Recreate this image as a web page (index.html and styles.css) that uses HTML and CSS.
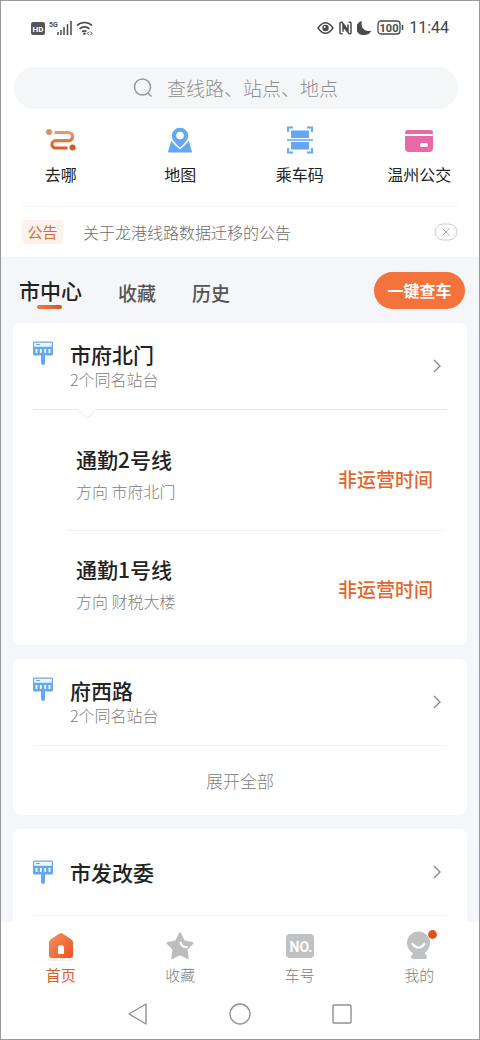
FILE: index.html
```html
<!DOCTYPE html>
<html lang="zh-CN">
<head>
<meta charset="utf-8">
<meta name="viewport" content="width=device-width, initial-scale=1">
<title>公交首页</title>
<link rel="stylesheet" href="styles.css">
</head>
<body>
<svg class="defs" width="0" height="0" aria-hidden="true">
  <defs>
    <linearGradient id="orange" x1="0" y1="0" x2="0" y2="1"><stop offset="0" stop-color="#f0986a"/><stop offset="1" stop-color="#df5a24"/></linearGradient>
    <linearGradient id="home" x1="0" y1="0" x2="1" y2="1"><stop offset="0" stop-color="#f7935f"/><stop offset="1" stop-color="#ea5226"/></linearGradient>
    <symbol id="stop" viewBox="0 0 22 24">
      <rect x="1" y="0.500" width="20" height="14" rx="1.500" fill="#64a8f3"/>
      <rect x="2.200" y="1.700" width="17.600" height="4" rx="0.500" fill="#f1f7fe"/>
      <path d="M4 3.500h4" stroke="#64a8f3" stroke-width="1"/>
      <path d="M4.500 8v4M8.800 8v4M13.200 8v4M17.500 8v4" stroke="#fff" stroke-width="1.800"/>
      <path d="M11 13v9" stroke="#64a8f3" stroke-width="4" stroke-linecap="round"/>
    </symbol>
    <symbol id="chevron" viewBox="0 0 10 16"><path d="M2 2l6 6-6 6" fill="none" stroke="#8b8b8b" stroke-width="1.400"/></symbol>
  </defs>
</svg>
<div class="app">
  <header class="top">
    <div class="status">
      <div class="status-group">
        <svg width="14" height="14" viewBox="0 0 14 14"><rect width="14" height="13" y="1" rx="2" fill="#555"/><text class="hd" x="7" y="11" text-anchor="middle">HD</text></svg>
        <svg width="23" height="16" viewBox="0 0 23 16"><text class="five-g" x="0" y="7">5G</text><path d="M9 12v3M12 10v5M15 7v8M18.500 4v11M22 1v14" stroke="#4a4a4a" stroke-width="1.500"/></svg>
        <svg width="18" height="16" viewBox="0 0 18 16"><path d="M1 5.500a11 11 0 0 1 15 0M3.500 8.800a7.500 7.500 0 0 1 10 0M6 11.800a4 4 0 0 1 4.500-.4" fill="none" stroke="#4a4a4a" stroke-width="1.600"/><circle cx="8.500" cy="13.800" r="1.200" fill="#4a4a4a"/><path d="M12.800 11.700l-1.500 1.700 1.500 1.700M14.500 11.700l1.500 1.700-1.500 1.700" fill="none" stroke="#4a4a4a"/></svg>
      </div>
      <div class="status-group status-right">
        <svg width="17" height="14" viewBox="0 0 17 14"><path d="M1 7Q8.500-3.500 16 7Q8.500 17.500 1 7z" fill="none" stroke="#4a4a4a" stroke-width="1.400"/><circle cx="8.500" cy="7" r="3.200" fill="#4a4a4a"/><circle cx="7.700" cy="6" r="1" fill="#fff"/></svg>
        <svg width="13" height="14" viewBox="0 0 13 14"><path d="M3.500 12.800H2Q1 12.800 1 11.800V2.200Q1 1.200 2 1.200h1l6 8V3.500M9.500 1.200H11q1 0 1 1v9.600q0 1-1 1h-1l-6-8v6" fill="none" stroke="#4a4a4a" stroke-width="1.500"/></svg>
        <svg width="15" height="14" viewBox="0 0 15 14"><path d="M5 0Q3.500 5 6.500 8T14.500 9.500Q12 14 7.500 14A7 7 0 0 1 5 0z" fill="#4a4a4a"/></svg>
        <svg width="27" height="15" viewBox="0 0 27 15"><rect x="1" y="1" width="22" height="13" rx="3" fill="none" stroke="#4a4a4a" stroke-width="1.300"/><text class="charge" x="12" y="11.500" text-anchor="middle">100</text><path d="M25.500 5v5" stroke="#4a4a4a" stroke-width="1.500"/></svg>
        <time>11:44</time>
      </div>
    </div>
    <label class="search">
      <svg width="20" height="20" viewBox="0 0 20 20"><circle cx="9.500" cy="9" r="8" fill="none" stroke="#999" stroke-width="1.500"/><path d="M15 15l3.500 3.500" stroke="#999" stroke-width="1.500"/></svg>
      <input type="text" placeholder="查线路、站点、地点" aria-label="查线路、站点、地点">
    </label>
    <nav class="quick" aria-label="快捷入口">
      <a href="#go"><svg width="32" height="28" viewBox="0 0 32 28"><circle cx="4" cy="6" r="3" fill="#e58c5e"/><path d="M9.500 6.500h14a4 4 0 0 1 0 8.200H10.500a3.600 3.600 0 0 0 0 7.300H22.500" fill="none" stroke="url(#orange)" stroke-width="3.200"/><circle cx="27.500" cy="21.500" r="3" fill="#dd5722"/></svg>去哪</a>
      <a href="#map"><svg width="28" height="28" viewBox="0 0 28 28"><path d="M5.500 15.500h17L25.500 26h-23z" fill="#64a8f3" stroke="#64a8f3" stroke-linejoin="round"/><path d="M14 22.500C9 18.500 5 15 5 10a9 9 0 0 1 18 0c0 5-4 8.500-9 12.500z" fill="#64a8f3" stroke="#fff" stroke-width="1.500"/><circle cx="14" cy="9.500" r="3.800" fill="#fff"/></svg>地图</a>
      <a href="#code"><svg width="28" height="28" viewBox="0 0 28 28"><path d="M2 6V1.500h5M21 1.500h5V6M2 22v4.500h5M21 26.500h5V22" fill="none" stroke="#64a8f3" stroke-width="2"/><path d="M5 4.500h18V12H5zM5 16h18v7.500H5z" fill="#64a8f3"/><path d="M1 14h26" stroke="#64a8f3" stroke-width="1.600"/></svg>乘车码</a>
      <a href="#card"><svg width="28" height="28" viewBox="0 0 28 28"><path d="M0 8V7q0-3 3-3h22q3 0 3 3v1zM0 10h28v12q0 4-4 4H4q-4 0-4-4z" fill="#e869a5"/><rect x="15" y="17" width="8" height="4" rx="2" fill="#fff"/></svg>温州公交</a>
    </nav>
    <div class="notice">
      <span class="tag">公告</span>
      <a href="#notice">关于龙港线路数据迁移的公告</a>
      <button class="close" aria-label="关闭"><svg width="24" height="18" viewBox="0 0 24 18"><rect x="1" y="1" width="22" height="16" rx="8" fill="none" stroke="#ccc"/><path d="M8.500 5.500l7 7M15.500 5.500l-7 7" stroke="#aaa"/></svg></button>
    </div>
  </header>

  <main>
    <div class="tabs">
      <button class="tab active">市中心</button>
      <button class="tab">收藏</button>
      <button class="tab">历史</button>
      <button class="find">一键查车</button>
    </div>

    <div class="cards">
      <section class="card">
        <a class="station" href="#s1">
          <svg class="stop" width="22" height="24"><use href="#stop"/></svg>
          <div class="station-text"><h2>市府北门</h2><p>2个同名站台</p></div>
          <svg width="10" height="16"><use href="#chevron"/></svg>
        </a>
        <div class="rule strong"><svg class="notch" width="20" height="12" viewBox="0 0 20 12"><path d="M0 0L10 9L20 0" fill="#fff" stroke="#e4e4e4"/><path d="M1 0h18" stroke="#fff" stroke-width="3"/></svg></div>
        <ul class="routes">
          <li><div><h3>通勤2号线</h3><p>方向 市府北门</p></div><span class="state">非运营时间</span></li>
          <li><div><h3>通勤1号线</h3><p>方向 财税大楼</p></div><span class="state">非运营时间</span></li>
        </ul>
      </section>

      <section class="card">
        <a class="station" href="#s2">
          <svg class="stop" width="22" height="24"><use href="#stop"/></svg>
          <div class="station-text"><h2>府西路</h2><p>2个同名站台</p></div>
          <svg width="10" height="16"><use href="#chevron"/></svg>
        </a>
        <div class="rule"></div>
        <button class="expand">展开全部</button>
      </section>

      <section class="card last">
        <a class="station single" href="#s3">
          <svg class="stop" width="22" height="24"><use href="#stop"/></svg>
          <div class="station-text"><h2>市发改委</h2></div>
          <svg width="10" height="16"><use href="#chevron"/></svg>
        </a>
        <div class="rule"></div>
      </section>
    </div>
  </main>

  <footer>
    <nav class="tabbar" aria-label="主导航">
      <a class="current" href="#home"><svg width="32" height="32" viewBox="0 0 32 32"><rect x="4" y="26" width="24" height="5" rx="2" fill="#fdeee7"/><path d="M14.500 3.600q1.500-1 3 0l9 6q1.500 1 1.500 3V25q0 3-3 3H7q-3 0-3-3V12.600q0-2 1.500-3z" fill="url(#home)"/><path d="M13 24v-6a3 3 0 0 1 6 0v6z" fill="#fff"/></svg>首页</a>
      <a href="#fav"><svg width="32" height="32" viewBox="0 0 32 32"><path d="M16 3.500l4 8 8.500 1.500-6 6.300 1.300 8.700-7.800-4-7.800 4 1.300-8.700-6-6.300L12 11.500z" fill="#bdbdbd" stroke="#bdbdbd" stroke-width="2" stroke-linejoin="round"/><path d="M16.500 12.500q1 5 6.500 4.500" fill="none" stroke="#fff" stroke-width="2.200" stroke-linecap="round"/></svg>收藏</a>
      <a href="#no"><svg width="32" height="32" viewBox="0 0 32 32"><rect x="2" y="4" width="28" height="24" rx="4" fill="#bfc1c2"/><text class="no" x="17" y="22" text-anchor="middle">NO.</text></svg>车号</a>
      <a href="#me"><svg width="40" height="32" viewBox="0 0 40 32"><path d="M14 23h12v1q2 1 2 3t-2 2H14q-2 0-2-2t2-3z" fill="#bfc1c2"/><circle cx="19.500" cy="13" r="11.500" fill="#bfc1c2"/><path d="M13.500 14q6 7 12 0" fill="none" stroke="#fff" stroke-width="2.200" stroke-linecap="round"/><circle cx="33.500" cy="4.500" r="4.400" fill="#df5122"/></svg>我的</a>
    </nav>
    <div class="system">
      <button aria-label="返回"><svg width="24" height="24" viewBox="0 0 24 24"><path d="M3 12L20 2v20z" fill="none" stroke="#909090" stroke-width="1.400" stroke-linejoin="round"/></svg></button>
      <button aria-label="主屏幕"><svg width="24" height="24" viewBox="0 0 24 24"><circle cx="12" cy="12" r="10" fill="none" stroke="#909090" stroke-width="1.400"/></svg></button>
      <button aria-label="最近任务"><svg width="24" height="24" viewBox="0 0 24 24"><rect x="3" y="3" width="18" height="18" rx="1" fill="none" stroke="#909090" stroke-width="1.400"/></svg></button>
    </div>
  </footer>
</div>
</body>
</html>
```
FILE: styles.css
```css
* { box-sizing: border-box; margin: 0; padding: 0; }
body { font: 16px/24px "Noto Sans CJK SC", sans-serif; color: #222; background: #fff; }
button, input { font: inherit; color: inherit; border: 0; background: none; }
button { cursor: pointer; }
a { color: inherit; text-decoration: none; }
svg { display: block; flex: none; }
.defs { position: absolute; }
.app { height: 100vh; display: flex; flex-direction: column; border: 1px solid #999; overflow: hidden; }

.top { flex: none; padding-bottom: 13px; }
.status { display: flex; justify-content: space-between; align-items: center; height: 53px; padding: 0 30px; }
.status-group { display: flex; align-items: center; gap: 4px; }
.status-right { gap: 5px; }
.status time { font: 16px/20px Roboto, sans-serif; color: #444; }
.hd { font: bold 8px Roboto, sans-serif; fill: #fff; }
.five-g { font: bold 7px Roboto, sans-serif; fill: #4a4a4a; }
.charge { font: bold 11px Roboto, sans-serif; fill: #4a4a4a; }

.search { display: flex; align-items: center; justify-content: center; gap: 14px; height: 42px; margin: 13px 21px 0 13px; border-radius: 21px; background: #f4f6f8; }
.search input { width: 172px; font-size: 19px; outline: 0; }
.search input::placeholder { color: #8f8f8f; opacity: 1; font-weight: 300; }

.quick { display: grid; grid-template-columns: repeat(4, 1fr); padding-top: 17px; }
.quick a { display: flex; flex-direction: column; align-items: center; gap: 8px; }

.notice { display: flex; align-items: center; margin: 20px 21px 0; padding-top: 13px; border-top: 1px solid #f3f3f3; font-weight: 300; color: #6c6c6c; }
.tag { width: 41px; margin-right: 20px; border-radius: 4px; background: #fef3ec; color: #dd6a35; font-size: 15px; text-align: center; font-weight: 400; }
.close { margin-left: auto; }

main { flex: 1; min-height: 0; overflow: hidden; background: #f4f6f9; padding: 0 12px; }
.tabs { display: flex; align-items: center; height: 66px; padding: 0 2px 0 6px; gap: 36px; }
.tab { font-size: 19px; line-height: 28px; font-weight: 500; color: #555; padding-top: 5px; }
.tab.active { font-size: 21px; color: #222; padding-top: 0; position: relative; }
.tab.active::after { content: ""; position: absolute; left: 18px; bottom: -5px; width: 25px; height: 4px; border-radius: 2px; background: linear-gradient(90deg, #f07a4b, #dc5525); }
.find { margin-left: auto; width: 91px; height: 37px; border-radius: 19px; background: #f4723b; color: #fff; font-weight: 700; }

.cards { display: flex; flex-direction: column; gap: 14px; }
.card { background: #fff; border-radius: 8px; }
.card.last { padding-bottom: 69px; }
.station { display: flex; align-items: center; gap: 16px; height: 86px; padding: 0 25px 0 19px; }
.stop { align-self: flex-start; margin-top: 18px; }
.single .stop { align-self: center; margin-top: 0; }
.station-text { flex: 1; }
h2, h3 { font-size: 21px; line-height: 26px; font-weight: 500; }
p { font-weight: 300; color: #808080; }
.rule { position: relative; height: 1px; margin: 0 20px; background: #f2f2f2; }
.rule.strong { background: #e4e4e4; }
.notch { position: absolute; left: 44px; top: 0; }
.routes { list-style: none; margin: 0 24px 0 55px; padding: 10px 0 5px; }
.routes li { display: flex; justify-content: space-between; align-items: flex-end; height: 110px; padding: 0 10px 27px 8px; }
.routes li + li { border-top: 1px solid #f2f2f2; }
.routes p { margin-top: 7px; }
.state { font-size: 19px; line-height: 48px; font-weight: 500; color: #e2662f; }
.expand { display: block; width: 100%; height: 69px; font-size: 17px; font-weight: 300; color: #808080; }

footer { flex: none; background: #fff; }
.tabbar { display: grid; grid-template-columns: repeat(4, 1fr); padding-top: 8px; font-size: 15px; color: #808080; font-weight: 300; }
.tabbar a { display: flex; flex-direction: column; align-items: center; gap: 1px; line-height: 24px; }
.tabbar .current { color: #dc5c28; font-weight: 400; }
.no { font: bold 14px Roboto, sans-serif; fill: #fff; }
.system { display: flex; justify-content: center; gap: 78px; height: 52px; padding-top: 15px; }
.system button { height: 24px; }
```
